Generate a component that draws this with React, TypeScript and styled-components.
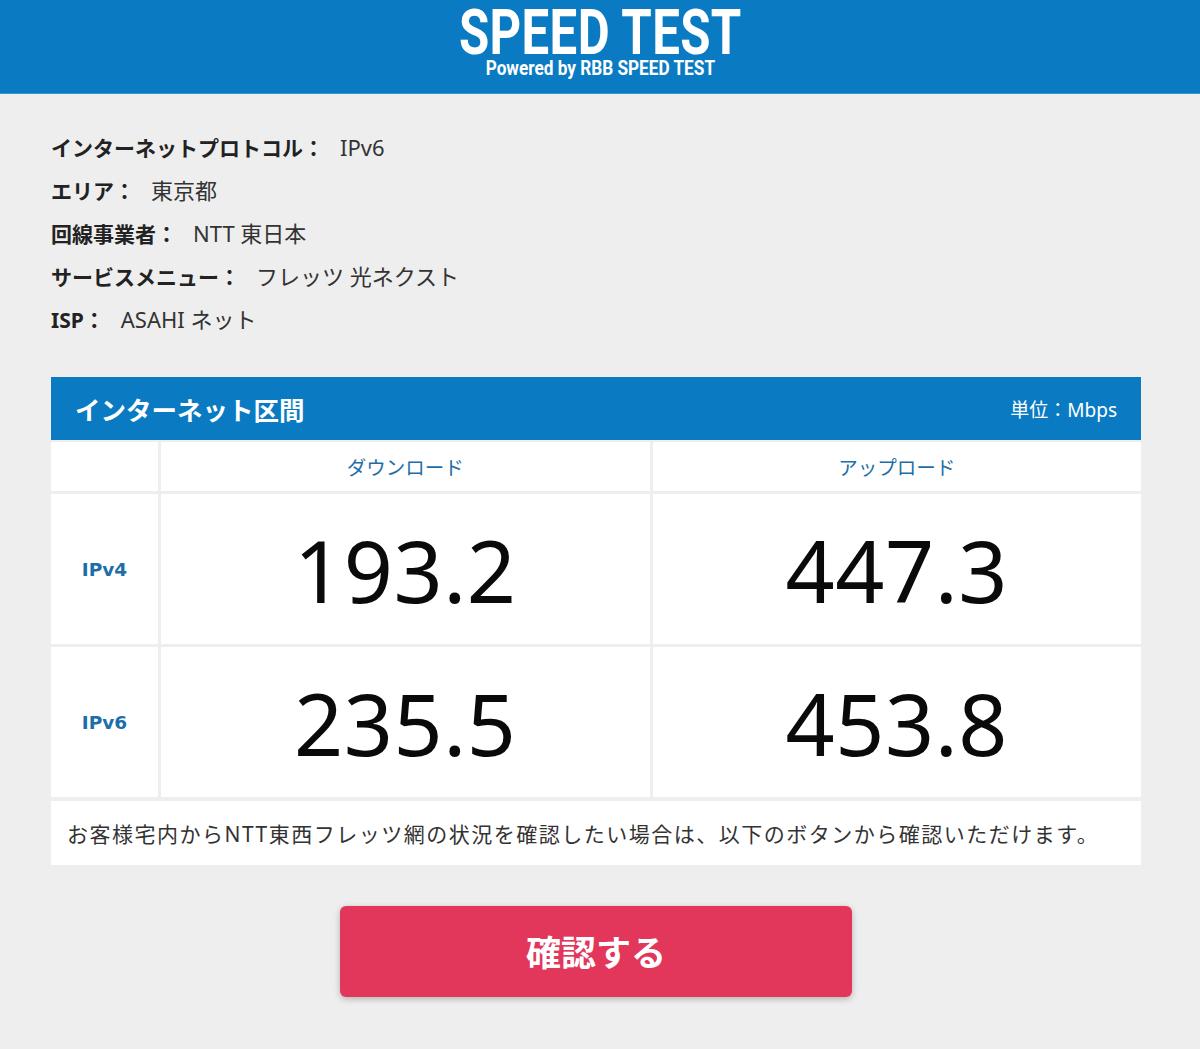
import styled, { createGlobalStyle } from 'styled-components';

const GlobalStyle = createGlobalStyle`
  html, body {
    margin: 0;
    padding: 0;
    background: #eeeeee;
  }
  body {
    font-family: "Noto Sans", "Noto Sans CJK JP", sans-serif;
    color: #222;
  }
`;

const BLUE = '#0a7bc3';

interface InfoItem {
  label: string;
  value: string;
}

interface SpeedRow {
  proto: string;
  down: string;
  up: string;
}

const info: InfoItem[] = [
  { label: 'インターネットプロトコル', value: 'IPv6' },
  { label: 'エリア', value: '東京都' },
  { label: '回線事業者', value: 'NTT 東日本' },
  { label: 'サービスメニュー', value: 'フレッツ 光ネクスト' },
  { label: 'ISP', value: 'ASAHI ネット' },
];

const rows: SpeedRow[] = [
  { proto: 'IPv4', down: '193.2', up: '447.3' },
  { proto: 'IPv6', down: '235.5', up: '453.8' },
];

const App = () => {
  return (
    <Page>
      <GlobalStyle />
      <Header>
        <Logo>
          <LogoTitle>SPEED TEST</LogoTitle>
          <LogoSub>Powered by RBB SPEED TEST</LogoSub>
        </Logo>
      </Header>

      <Main>
        <InfoList>
          {info.map((item) => (
            <InfoLine key={item.label}>
              <InfoLabel>{item.label}：</InfoLabel>
              <span>{item.value}</span>
            </InfoLine>
          ))}
        </InfoList>

        <Panel>
          <PanelHead>
            <PanelTitle>インターネット区間</PanelTitle>
            <PanelUnit>単位：Mbps</PanelUnit>
          </PanelHead>
          <Grid>
            <Cell />
            <ColHead>ダウンロード</ColHead>
            <ColHead>アップロード</ColHead>
            {rows.map((r) => (
              <Row key={r.proto}>
                <RowHead>{r.proto}</RowHead>
                <Value>{r.down}</Value>
                <Value>{r.up}</Value>
              </Row>
            ))}
          </Grid>
          <Note>
            お客様宅内からNTT東西フレッツ網の状況を確認したい場合は、以下のボタンから確認いただけます。
          </Note>
          <ButtonRow>
            <CheckButton type="button">確認する</CheckButton>
          </ButtonRow>
        </Panel>
      </Main>
    </Page>
  );
};

const Page = styled.div`
  min-height: 1049px;
  background: #eeeeee;
`;

const Header = styled.header`
  height: 93px;
  background: ${BLUE};
  display: flex;
  justify-content: center;
  border-bottom: 1px solid #3c95cf;
`;

const Logo = styled.div`
  display: flex;
  flex-direction: column;
  align-items: center;
  color: #fff;
  font-family: Roboto, "Liberation Sans", sans-serif;
  font-weight: 700;
`;

const LogoTitle = styled.div`
  font-size: 63px;
  line-height: 54px;
  margin-top: 6px;
  transform: scaleX(0.78);
  letter-spacing: 0.5px;
`;

const LogoSub = styled.div`
  font-size: 20px;
  line-height: 16px;
  transform: scaleX(0.86);
`;

const Main = styled.main`
  padding: 32px 0 0 51px;
  width: 1090px;
`;

const InfoList = styled.div`
  display: flex;
  flex-direction: column;
`;

const InfoLine = styled.div`
  height: 43px;
  font-size: 22px;
  line-height: 43px;
  color: #333;
`;

const InfoLabel = styled.span`
  font-size: 21px;
  font-weight: 700;
  color: #222;
  margin-right: 16px;
`;

const Panel = styled.section`
  margin-top: 36px;
  display: flex;
  flex-direction: column;
`;

const PanelHead = styled.div`
  height: 63px;
  background: ${BLUE};
  color: #fff;
  display: flex;
  align-items: center;
  justify-content: space-between;
  padding: 0 24px;
`;

const PanelTitle = styled.h2`
  margin: 0;
  font-size: 25.5px;
  font-weight: 700;
`;

const PanelUnit = styled.span`
  font-size: 19px;
`;

const Grid = styled.div`
  display: grid;
  grid-template-columns: 107px 1fr 1fr;
  grid-auto-rows: auto;
  gap: 3px;
  margin-top: 2px;
`;

const Cell = styled.div`
  background: #fff;
`;

const ColHead = styled.div`
  background: #fff;
  height: 49px;
  display: flex;
  align-items: center;
  justify-content: center;
  font-size: 19.5px;
  color: #1d6ea8;
`;

const Row = styled.div`
  display: contents;
`;

const RowHead = styled.div`
  background: #fff;
  height: 150px;
  display: flex;
  align-items: center;
  justify-content: center;
  font-family: "DejaVu Sans", sans-serif;
  font-weight: 700;
  font-size: 18.5px;
  color: #1d6ea8;
`;

const Value = styled.div`
  background: #fff;
  display: flex;
  align-items: center;
  justify-content: center;
  font-size: 86px;
  color: #0a0a0a;
  letter-spacing: 0.5px;
`;

const Note = styled.p`
  margin: 4px 0 0;
  background: #fff;
  height: 64px;
  display: flex;
  align-items: center;
  padding: 0 16px;
  font-size: 21px;
  letter-spacing: 1.5px;
  color: #333;
`;

const ButtonRow = styled.div`
  display: flex;
  justify-content: center;
  padding-top: 41px;
`;

const CheckButton = styled.button`
  width: 512px;
  height: 91px;
  border: none;
  border-radius: 6px;
  background: #e2365a;
  color: #fff;
  font-family: "Noto Sans CJK JP", sans-serif;
  font-size: 35px;
  font-weight: 700;
  padding-bottom: 4px;
  box-shadow: 0 2px 6px rgba(0, 0, 0, 0.25);
  cursor: pointer;
`;

export default App;
